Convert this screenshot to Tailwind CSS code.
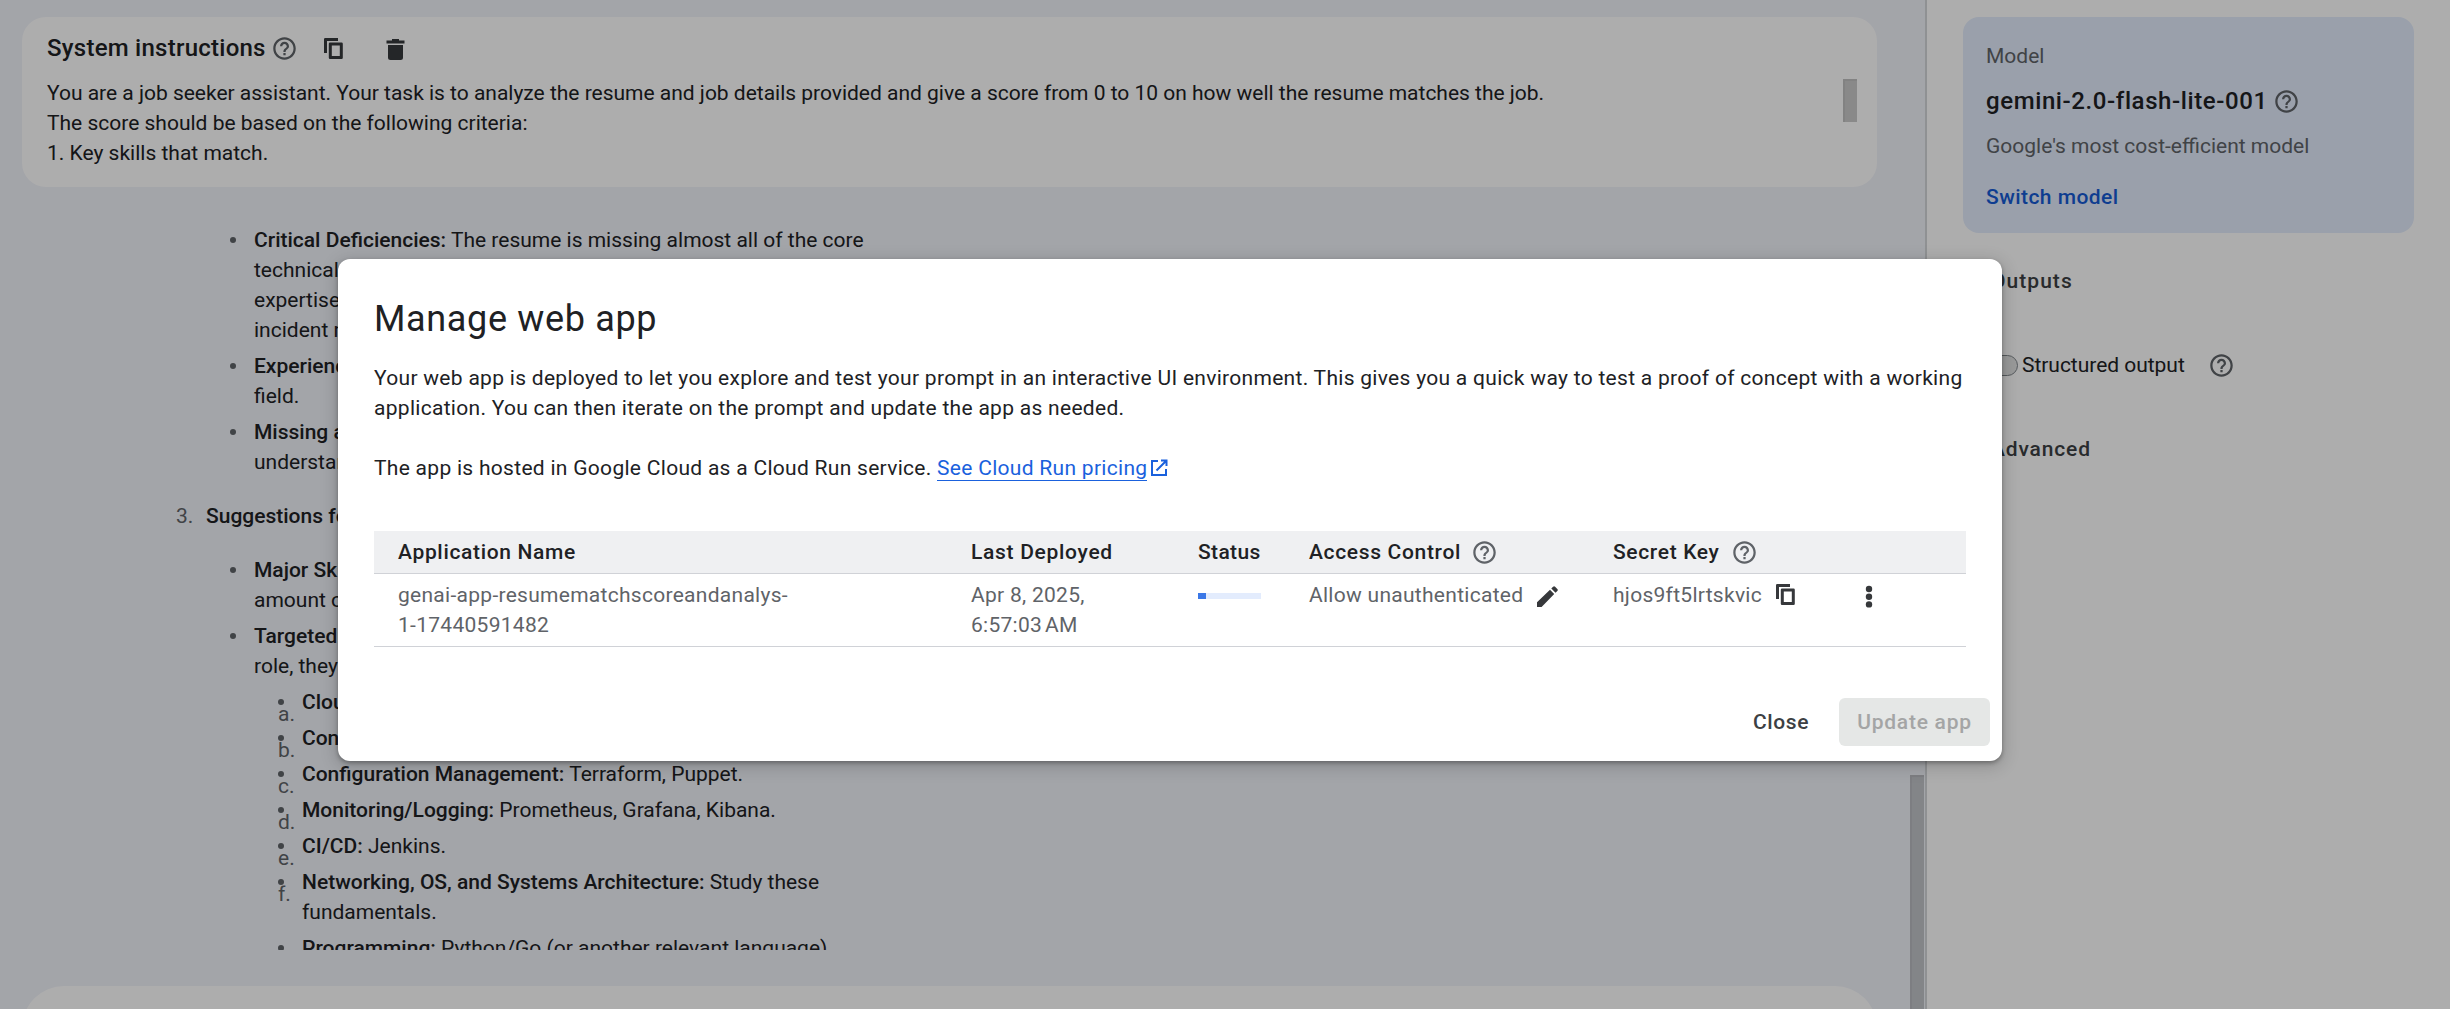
<!DOCTYPE html>
<html lang="en">
<head>
<meta charset="utf-8">
<title>Manage web app</title>
<script src="https://cdn.jsdelivr.net/npm/@tailwindcss/browser@4"></script>
</head>
<body class="relative h-[1009px] w-[2450px] overflow-hidden bg-white font-['Roboto',sans-serif] text-[21px] leading-[30px] text-[#202124]">
<svg class="hidden">
  <symbol id="help" viewBox="0 0 24 24"><path d="M11 18h2v-2h-2v2zm1-16C6.48 2 2 6.48 2 12s4.48 10 10 10 10-4.48 10-10S17.52 2 12 2zm0 18c-4.41 0-8-3.59-8-8s3.59-8 8-8 8 3.59 8 8-3.59 8-8 8zm0-14c-2.21 0-4 1.79-4 4h2c0-1.1.9-2 2-2s2 .9 2 2c0 2-3 1.75-3 5h2c0-2.25 3-2.5 3-5 0-2.21-1.79-4-4-4z"/></symbol>
  <symbol id="copy" viewBox="0 0 19 21"><path d="M14 0H1.200Q0 0 0 1.200V15H3V3H14zM6 4.500Q4.800 4.500 4.800 5.700V19.800Q4.800 21 6 21H17.600Q18.800 21 18.800 19.800V5.700Q18.800 4.500 17.600 4.500zM7.800 7.500H15.800V18H7.800z" fill-rule="evenodd"/></symbol>
</svg>

<div class="flex h-full">
  <main class="flex h-[1009px] w-[1927px] flex-col overflow-hidden border-r-2 border-[#d3d6d9] bg-[#f1f3fa]">
    <section class="mt-[17px] ml-[22px] flex h-[170px] w-[1855px] shrink-0 justify-between rounded-3xl bg-white pt-[13px] pr-5 pl-[25px]">
      <div>
        <div class="mb-3 flex h-9 items-center">
          <h2 class="text-[24px] font-medium leading-9 tracking-[0.25px]">System instructions</h2>
          <svg class="ml-[5px] size-[27px] fill-[#5f6368]"><use href="#help"/></svg>
          <svg class="ml-[26px] h-[21px] w-[19px] fill-[#36383b]"><use href="#copy"/></svg>
          <svg class="ml-[43px] mt-[2px] h-[21px] w-[19px] fill-[#36383b]" viewBox="0 0 19 21"><path d="M6 0h7v1.500h5.500v3h-18v-3H6zM2 6h15v12.500q0 2.500-2.500 2.500h-10Q2 21 2 18.500z"/></svg>
        </div>
        <p class="tracking-[-0.01px]">You are a job seeker assistant. Your task is to analyze the resume and job details provided and give a score from 0 to 10 on how well the resume matches the job.</p>
        <p>The score should be based on the following criteria:</p>
        <p>1. Key skills that match.</p>
      </div>
      <div class="mt-[49px] h-[43px] w-[14px] border-t-2 border-l-2 border-[#c0c0c0] bg-[#cacaca]"></div>
    </section>

    <div class="mt-[38px] flex h-[725px] shrink-0 justify-between overflow-hidden">
      <div class="ml-[176px] w-[692px]">
        <ul class="flex flex-col gap-[6px] pl-[54px]">
          <li class="flex"><i class="mt-3 mr-[18px] size-[6px] shrink-0 rounded-full bg-[#5f6368]"></i><p><b class="font-medium">Critical Deficiencies:</b> The resume is missing almost all of the core<br>technical skills<br>expertise and<br>incident response.</p></li>
          <li class="flex"><i class="mt-3 mr-[18px] size-[6px] shrink-0 rounded-full bg-[#5f6368]"></i><p><b class="font-medium">Experience:</b><br>field.</p></li>
          <li class="flex"><i class="mt-3 mr-[18px] size-[6px] shrink-0 rounded-full bg-[#5f6368]"></i><p><b class="font-medium">Missing a</b><br>understanding</p></li>
        </ul>
        <div class="my-6 flex"><span class="w-[30px] text-[#5f6368]">3.</span><b class="font-medium">Suggestions for</b></div>
        <ul class="flex flex-col gap-[6px] pl-[54px]">
          <li class="flex"><i class="mt-3 mr-[18px] size-[6px] shrink-0 rounded-full bg-[#5f6368]"></i><p><b class="font-medium">Major Skill</b><br>amount of</p></li>
          <li class="flex"><i class="mt-3 mr-[18px] size-[6px] shrink-0 rounded-full bg-[#5f6368]"></i><p><b class="font-medium">Targeted</b><br>role, they</p></li>
        </ul>
        <ul class="flex flex-col gap-[6px] pt-[6px] pl-[102px]">
          <li class="relative flex"><i class="mt-3 mr-[18px] size-[6px] shrink-0 rounded-full bg-[#5f6368]"></i><span class="absolute top-3 left-0 text-[#5f6368]">a.</span><b class="font-medium">Cloud:</b></li>
          <li class="relative flex"><i class="mt-3 mr-[18px] size-[6px] shrink-0 rounded-full bg-[#5f6368]"></i><span class="absolute top-3 left-0 text-[#5f6368]">b.</span><b class="font-medium">Con</b></li>
          <li class="relative flex"><i class="mt-3 mr-[18px] size-[6px] shrink-0 rounded-full bg-[#5f6368]"></i><span class="absolute top-3 left-0 text-[#5f6368]">c.</span><p><b class="font-medium">Configuration Management:</b> Terraform, Puppet.</p></li>
          <li class="relative flex"><i class="mt-3 mr-[18px] size-[6px] shrink-0 rounded-full bg-[#5f6368]"></i><span class="absolute top-3 left-0 text-[#5f6368]">d.</span><p><b class="font-medium">Monitoring/Logging:</b> Prometheus, Grafana, Kibana.</p></li>
          <li class="relative flex"><i class="mt-3 mr-[18px] size-[6px] shrink-0 rounded-full bg-[#5f6368]"></i><span class="absolute top-3 left-0 text-[#5f6368]">e.</span><p><b class="font-medium">CI/CD:</b> Jenkins.</p></li>
          <li class="relative flex"><i class="mt-3 mr-[18px] size-[6px] shrink-0 rounded-full bg-[#5f6368]"></i><span class="absolute top-3 left-0 text-[#5f6368]">f.</span><p><b class="font-medium">Networking, OS, and Systems Architecture:</b> Study these<br>fundamentals.</p></li>
          <li class="flex"><i class="mt-3 mr-[18px] size-[6px] shrink-0 rounded-full bg-[#5f6368]"></i><p><b class="font-medium">Programming:</b> Python/Go (or another relevant language)</p></li>
        </ul>
      </div>
    </div>
    <div class="mt-9 ml-[22px] h-[120px] w-[1855px] shrink-0 rounded-[42px] bg-white"></div>
    <div class="absolute top-[775px] left-[1910px] h-[234px] w-[14px] border-t-2 border-l-2 border-[#b8bac0] bg-[#c2c4c9]"></div>
  </main>

  <aside class="w-[523px] pt-[17px] pl-9">
    <section class="h-[216px] w-[451px] rounded-2xl bg-[#e3ecfd] pt-6 pl-[23px]">
      <p class="text-[#5f6368]">Model</p>
      <div class="mt-3 flex h-9 items-center">
        <h2 class="text-[24px] font-medium leading-9 tracking-[0.6px]">gemini-2.0-flash-lite-001</h2>
        <svg class="ml-[5px] mt-px size-[27px] fill-[#5f6368]"><use href="#help"/></svg>
      </div>
      <p class="mt-[12px] text-[#5f6368]">Google's most cost-efficient model</p>
      <p class="mt-[21px] font-medium tracking-[0.45px] text-[#165bd4]">Switch model</p>
    </section>
    <div class="pl-6">
      <h3 class="mt-[33px] ml-1 font-medium tracking-[1.05px] text-[#3c4043]">Outputs</h3>
      <div class="mt-[54px] flex h-[30px] items-center">
        <div class="h-[21px] w-[31px] rounded-full border border-[#80868b] bg-[#e2e3e4]"></div>
        <span class="ml-[4px] tracking-[-0.03px]">Structured output</span>
        <svg class="ml-[23px] size-[27px] fill-[#5f6368]"><use href="#help"/></svg>
      </div>
      <h3 class="mt-[54px] ml-1 font-medium tracking-[0.85px] text-[#3c4043]">Advanced</h3>
    </div>
  </aside>
</div>

<div class="absolute inset-0 bg-black/32">
  <div role="dialog" class="absolute top-[259px] left-[338px] flex h-[502px] w-[1664px] flex-col rounded-xl bg-white px-9 shadow-[0_2px_4px_rgba(0,0,0,0.3),0_4px_16px_3px_rgba(0,0,0,0.15)]">
    <h1 class="mt-[36px] text-[36px] leading-[48px] tracking-[0.65px]">Manage web app</h1>
    <p class="mt-5 tracking-[0.293px] whitespace-nowrap">Your web app is deployed to let you explore and test your prompt in an interactive UI environment. This gives you a quick way to test a proof of concept with a working<br>application. You can then iterate on the prompt and update the app as needed.</p>
    <p class="mt-[30px] flex tracking-[0.29px]"><span>The app is hosted in Google Cloud as a Cloud Run service.&nbsp;</span><a class="h-7 border-b border-[#1a61dd] text-[#1a61dd]">See Cloud Run pricing</a><svg class="mt-[6px] ml-1 size-[17px] fill-none stroke-[#1a61dd] stroke-2" viewBox="0 0 17 17"><path d="M7 2H1v14h14V10M10 1.500h5.500V7M15 2L5.500 11.500"/></svg></p>
    <div class="mt-[48px] w-[1592px]">
      <div class="grid h-[43px] grid-cols-[573px_227px_111px_304px_1fr] items-center border-b border-[#d0d2d7] bg-[#eff0f2] pl-6 font-medium">
        <span class="tracking-[0.67px]">Application Name</span>
        <span class="tracking-[0.7px]">Last Deployed</span>
        <span class="tracking-[0.35px]">Status</span>
        <span class="flex items-center tracking-[0.67px]">Access Control<svg class="ml-[10px] size-[27px] fill-[#5f6368]"><use href="#help"/></svg></span>
        <span class="flex items-center tracking-[0.65px]">Secret Key<svg class="ml-[11px] size-[27px] fill-[#5f6368]"><use href="#help"/></svg></span>
      </div>
      <div class="grid h-[73px] grid-cols-[573px_227px_111px_304px_244px_1fr] border-b border-[#d0d2d7] pt-[6px] pl-6 tracking-[0.28px] text-[#5f6368]">
        <span>genai-app-resumematchscoreandanalys-<br>1-17440591482</span>
        <span>Apr 8, 2025,<br>6:57:03&#8239;AM</span>
        <span class="mt-[13px] h-[6px] w-[63px] bg-[#e3ecfd]"><i class="block h-[6px] w-2 bg-[#3b78e7]"></i></span>
        <span class="flex h-[30px]">Allow unauthenticated<svg class="mt-[6px] ml-[14px] size-[21px] fill-[#36383b]" viewBox="0 0 21 21"><path d="M0 21v-4.800L13 3.800l4.200 4.200L4.600 21zM14.300 2.500L16.100.7q1-1 2 0l2.200 2.200q1 1 0 2l-1.800 1.800z"/></svg></span>
        <span class="flex h-[30px]">hjos9ft5lrtskvic<svg class="mt-1 ml-[14px] h-[21px] w-[19px] fill-[#36383b]"><use href="#copy"/></svg></span>
        <svg class="mt-[5px] ml-2 h-6 w-2 fill-[#36383b]" viewBox="0 0 8 24"><circle cx="4" cy="4" r="3.200"/><circle cx="4" cy="11.700" r="3.200"/><circle cx="4" cy="19.400" r="3.200"/></svg>
      </div>
    </div>
    <div class="-mr-6 mt-[51px] flex items-center justify-end gap-[30px] font-medium">
      <button class="tracking-[0.6px] text-[#3c4043]">Close</button>
      <button class="h-12 w-[151px] rounded-md bg-[#e5e7e6] tracking-[0.75px] text-[#a4a5a5]">Update app</button>
    </div>
  </div>
</div>
</body>
</html>
